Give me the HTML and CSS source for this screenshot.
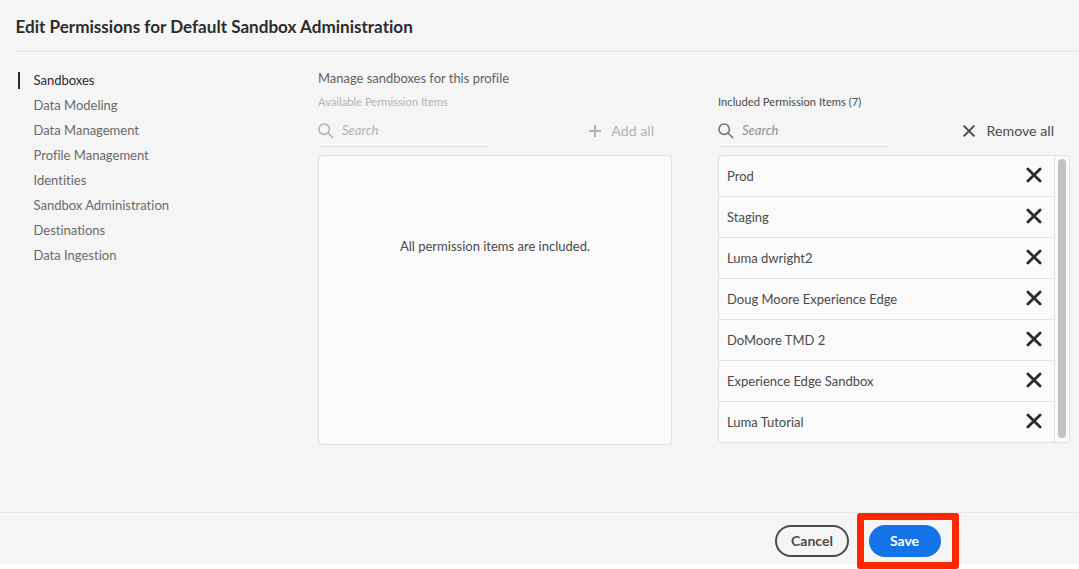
FILE: index.html
```
<!DOCTYPE html>
<html lang="en">
<head>
<meta charset="utf-8">
<title>Edit Permissions for Default Sandbox Administration</title>
<link rel="stylesheet" href="styles.css">
</head>
<body>
<svg class="defs" aria-hidden="true">
  <symbol id="search" viewBox="0 0 16 16"><circle cx="6.2" cy="6.2" r="5.2"/><path d="M10 10l5 5"/></symbol>
  <symbol id="cross" viewBox="0 0 16 16"><path d="M1.9 1.9l12.2 12.2M14.1 1.9L1.9 14.1"/></symbol>
</svg>
<div class="dialog">
  <header class="header"><h1 class="title">Edit Permissions for Default Sandbox Administration</h1></header>
  <main class="content">
    <nav class="nav">
      <a class="nav-item selected">Sandboxes</a>
      <a class="nav-item">Data Modeling</a>
      <a class="nav-item">Data Management</a>
      <a class="nav-item">Profile Management</a>
      <a class="nav-item">Identities</a>
      <a class="nav-item">Sandbox Administration</a>
      <a class="nav-item">Destinations</a>
      <a class="nav-item">Data Ingestion</a>
    </nav>
    <section class="editor">
      <h2 class="subtitle">Manage sandboxes for this profile</h2>
      <div class="columns">
        <div class="column available">
          <div class="label">Available Permission Items</div>
          <div class="tools">
            <div class="search"><svg class="search-icon"><use href="#search"/></svg><span class="placeholder">Search</span></div>
            <div class="action"><svg class="plus-icon" viewBox="0 0 12 12"><path d="M6 0v12M0 6h12"/></svg><span>Add all</span></div>
          </div>
          <div class="empty">All permission items are included.</div>
        </div>
        <div class="column included">
          <div class="label">Included Permission Items (7)</div>
          <div class="tools">
            <div class="search"><svg class="search-icon"><use href="#search"/></svg><span class="placeholder">Search</span></div>
            <div class="action"><svg class="remove-icon"><use href="#cross"/></svg><span>Remove all</span></div>
          </div>
          <div class="list">
            <div class="rows">
              <div class="row"><span>Prod</span><svg class="row-icon"><use href="#cross"/></svg></div>
              <div class="row"><span>Staging</span><svg class="row-icon"><use href="#cross"/></svg></div>
              <div class="row"><span>Luma dwright2</span><svg class="row-icon"><use href="#cross"/></svg></div>
              <div class="row"><span>Doug Moore Experience Edge</span><svg class="row-icon"><use href="#cross"/></svg></div>
              <div class="row"><span>DoMoore TMD 2</span><svg class="row-icon"><use href="#cross"/></svg></div>
              <div class="row"><span>Experience Edge Sandbox</span><svg class="row-icon"><use href="#cross"/></svg></div>
              <div class="row"><span>Luma Tutorial</span><svg class="row-icon"><use href="#cross"/></svg></div>
            </div>
            <div class="scrollbar"><div class="thumb"></div></div>
          </div>
        </div>
      </div>
    </section>
  </main>
  <footer class="footer">
    <button class="button cancel">Cancel</button>
    <div class="highlight"><button class="button save">Save</button></div>
  </footer>
</div>
</body>
</html>
```
FILE: styles.css
```
* { box-sizing: border-box; }
body {
  margin: 0;
  height: 569px;
  background: #fff;
  font: 13px/25px Lato, "Noto Sans", sans-serif;
  font-variant-ligatures: none;
  color: #4b4b4b;
}
.defs { display: none; }
svg { display: block; fill: none; stroke: currentColor; overflow: visible; }
.dialog { display: flex; flex-direction: column; height: 564px; background: #f5f5f5; }
.header { height: 52px; margin-left: 15px; border-bottom: 2px solid #eaeaea; }
.title { margin: 0; padding: 2px 0 0 0.5px; font-size: 17.08px; line-height: 50px; font-weight: 700; color: #2c2c2c; }
.content { flex: 1; display: flex; }
.nav { width: 318px; padding: 16px 0 0 18px; }
.nav-item { display: flex; align-items: center; height: 25px; padding-left: 15.5px; color: #6a6a6a; }
.selected { color: #2c2c2c; padding-left: 0; }
.selected::before { content: ""; width: 2px; height: 17px; margin-right: 13.5px; background: #2c2c2c; }
.editor { flex: 1; padding-top: 13px; }
.subtitle { margin: 0; font-size: 12.95px; line-height: 26px; font-weight: 400; color: #626262; }
.columns { display: flex; gap: 46px; }
.column { width: 354px; }
.label { height: 23px; font-size: 11.2px; line-height: 22px; }
.available .label, .available .tools { color: #b3b3b3; }
.tools { display: flex; align-items: center; height: 33px; width: 336px; justify-content: space-between; }
.search { display: flex; align-items: center; gap: 8px; width: 172px; height: 33px; border-bottom: 1px solid #e1e1e1; }
.search-icon { width: 16px; height: 16px; margin-top: 2px; stroke-width: 1.6; color: #747474; }
.placeholder { font-style: italic; color: #909090; }
.available .search-icon, .available .placeholder { color: #b3b3b3; }
.action { display: flex; align-items: center; font-size: 14.2px; gap: 10px; }
.plus-icon { width: 12px; height: 12px; stroke-width: 2; }
.remove-icon { width: 14px; height: 14px; stroke-width: 2.3; }
.empty { height: 290px; margin-top: 8px; padding-top: 78px; border: 1px solid #e1e1e1; border-radius: 4px; background: #fafafa; text-align: center; }
.list { display: flex; width: 352px; height: 288px; margin-top: 8px; border: 1px solid #e1e1e1; border-radius: 4px; background: #fafafa; }
.rows { width: 336px; border-right: 1px solid #e1e1e1; }
.row { display: flex; align-items: center; justify-content: space-between; height: 41px; padding: 0 12px 0 8px; border-bottom: 1px solid #e1e1e1; }
.row:last-child { height: 40px; border-bottom: 0; }
.row-icon { width: 16px; height: 16px; margin-top: -2px; stroke-width: 2.8; stroke-linecap: round; color: #2c2c2c; }
.scrollbar { padding: 3px; }
.thumb { width: 8px; height: 279px; border-radius: 4px; background: #c1c1c1; }
.included .action { gap: 10.5px; }
.footer { display: flex; height: 52px; padding: 12px 0 0 775px; border-top: 1px solid #e8e8e8; }
.button { height: 32px; padding: 0 0 2px; border: 0; border-radius: 16px; font: 700 14px Lato, "Noto Sans", sans-serif; }
.cancel { width: 74px; border: 2px solid #4b4b4b; background: transparent; color: #4b4b4b; }
.highlight { display: flex; width: 102px; height: 56px; margin: -12px 0 0 7.6px; padding: 5px 0 0 5.4px; border: 7px solid #ff2600; border-radius: 3px; }
.save { width: 72px; padding-right: 1px; background: #1473e6; color: #fff; }
```
